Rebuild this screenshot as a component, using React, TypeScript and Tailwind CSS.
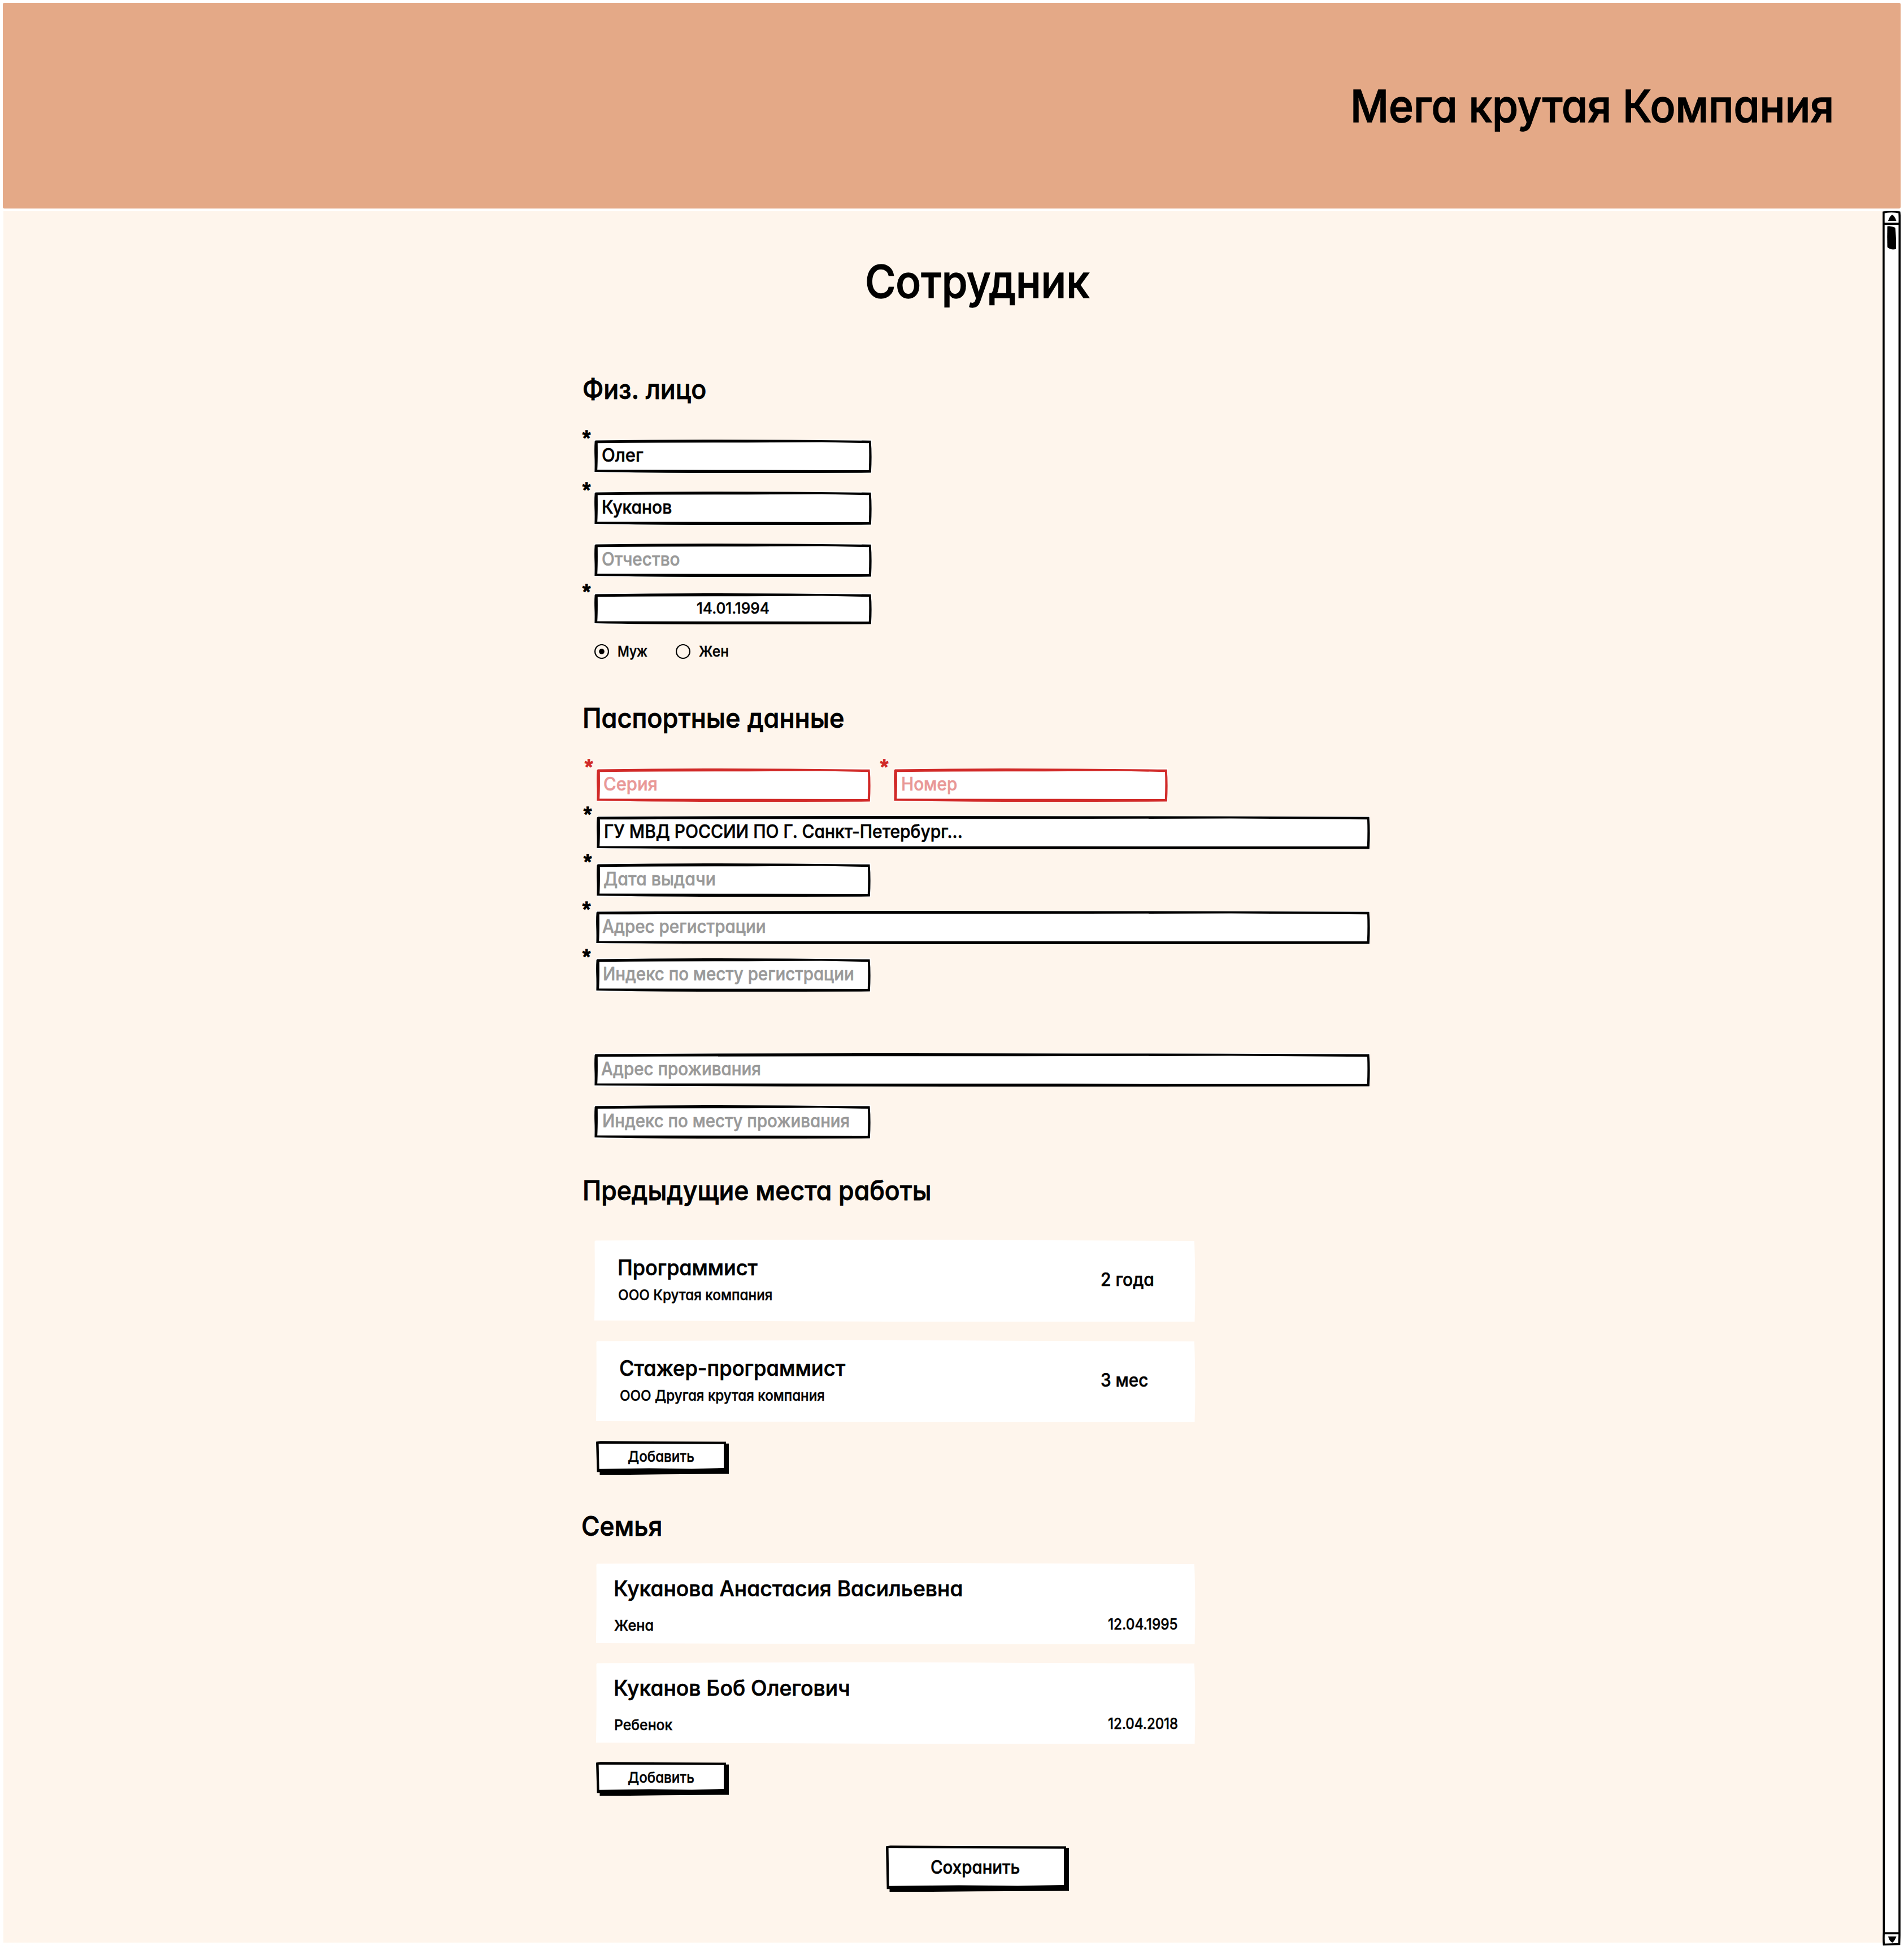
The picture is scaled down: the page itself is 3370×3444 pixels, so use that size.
import { useLayoutEffect, useRef, useState, type ReactNode } from 'react';

/** A line of text condensed or widened so that it fills `w` pixels. */
function Fit({ w, children, className = '' }: { w: number; children: string; className?: string }) {
  const ref = useRef<HTMLSpanElement>(null);
  const [k, setK] = useState(1);
  useLayoutEffect(() => {
    const el = ref.current;
    if (!el) return;
    const em = parseFloat(getComputedStyle(el).fontSize);
    setK(w / (el.offsetWidth - em * 0.115));
  }, [w]);
  return (
    <span className={`block shrink-0 whitespace-nowrap leading-none ${className}`} style={{ width: w }}>
      <span
        ref={ref}
        className="-ml-[0.055em] inline-block origin-left align-top [-webkit-text-stroke:0.018em_currentColor] [stroke-linejoin:round]"
        style={{ transform: `translateY(1px) scaleX(${k})` }}
      >
        {children}
      </span>
    </span>
  );
}

function Frame({ w, h, color }: { w: number; h: number; color: string }) {
  const outer = `M2 1.5 Q${w * 0.2} 0 ${w * 0.4} 0 Q${w * 0.7} 0.2 ${w - 1.5} 1.8 Q${w + 0.6} ${h * 0.45} ${w - 1.2} ${h - 0.4} Q${w * 0.75} ${h} ${w * 0.5} ${h} Q${w * 0.2} ${h} 0.4 ${h - 2} Q0.8 ${h * 0.7} 0.3 ${h * 0.5} Q-0.2 ${h * 0.25} 0.6 3 Z`;
  const inner = `M5.8 6.2 Q${w * 0.3} 4.9 ${w * 0.55} 5.3 L${w * 0.82} 4.6 L${w - 5} 6.2 Q${w - 4.2} ${h * 0.5} ${w - 5.2} ${h - 4.9} L${w * 0.6} ${h - 5.2} L5.2 ${h - 5.6} Q6.2 ${h * 0.6} 5.8 6.2 Z`;
  return (
    <svg className="absolute inset-0" width={w} height={h}>
      <rect width={w} height={h} fill="#fff" />
      <path d={outer + inner} fill={color} fillRule="evenodd" />
    </svg>
  );
}

type FieldProps = {
  w: number;
  h?: number;
  tw: number;
  text: string;
  tone?: 'value' | 'hint' | 'error';
  /** Horizontal place of the "required" mark; no mark when absent. */
  mark?: string;
  className?: string;
  textClass?: string;
};

const tones = { value: 'text-black', hint: 'text-[#999999]', error: 'text-[#e99897]' };

function Field({ w, h = 59, tw, text, tone = 'hint', mark, className = '', textClass = 'pl-[15px] pb-[5px] text-[32px]' }: FieldProps) {
  return (
    <div className={`relative ${className}`} style={{ width: w, height: h }}>
      <Frame w={w} h={h} color={tone === 'error' ? '#d12a28' : '#000'} />
      <div className={`relative flex h-full items-center ${tones[tone]} ${textClass}`}>
        <Fit w={tw}>{text}</Fit>
      </div>
      {mark && (
        <span
          className={`absolute -top-[20px] font-[Roboto,sans-serif] text-[31px] font-bold leading-none [-webkit-text-stroke:1.6px_currentColor] [stroke-linejoin:round] ${mark} ${tone === 'error' ? 'text-[#d12a28]' : 'text-black'}`}
        >
          *
        </span>
      )}
    </div>
  );
}

function Heading({ w, children, className }: { w: number; children: string; className: string }) {
  return (
    <h2 className={`text-[48px] leading-none ${className}`}>
      <Fit w={w}>{children}</Fit>
    </h2>
  );
}

function Card({ w, h, className, children }: { w: number; h: number; className: string; children: ReactNode }) {
  return (
    <div className={`relative ${className}`} style={{ width: w, height: h }}>
      <svg className="absolute inset-0" width={w} height={h}>
        <path
          d={`M2 1.5 Q${w * 0.3} -0.5 ${w * 0.6} 0.3 L${w - 2} 2 Q${w + 0.5} ${h * 0.5} ${w - 1.5} ${h} L${w * 0.5} ${h} L0 ${h - 2} Q1.2 ${h * 0.5} 0.5 3 Z`}
          fill="#fff"
        />
      </svg>
      <div className="relative flex h-full justify-between">{children}</div>
    </div>
  );
}

type JobProps = { w: number; className: string; title: string; tw: number; org: string; ow: number; term: string; ew: number };

function Job({ w, className, title, tw, org, ow, term, ew }: JobProps) {
  return (
    <Card w={w} h={145} className={className}>
      <div className="flex flex-col gap-[17px] pl-[43px] pt-[29px]">
        <Fit w={tw} className="text-[38px]">{title}</Fit>
        <Fit w={ow} className="text-[26px]">{org}</Fit>
      </div>
      <div className="flex w-[166px] items-center pb-[6px] text-[32px]">
        <Fit w={ew}>{term}</Fit>
      </div>
    </Card>
  );
}

function Relative({ name, nw, role, rw, date }: { name: string; nw: number; role: string; rw: number; date: string }) {
  return (
    <Card w={1061} h={144} className="mb-8 ml-[25px]">
      <div className="flex flex-col gap-[34px] pl-[33px] pt-[25px]">
        <Fit w={nw} className="text-[38px]">{name}</Fit>
        <Fit w={rw} className="text-[26px]">{role}</Fit>
      </div>
      <div className="w-[154px] pt-[94px] text-[26.5px]">
        <Fit w={121}>{date}</Fit>
      </div>
    </Card>
  );
}

function SketchButton({ w, h, tw, className, textClass, children }: { w: number; h: number; tw: number; className: string; textClass: string; children: string }) {
  return (
    <button type="button" className={`relative block ${className}`} style={{ width: w, height: h }}>
      <svg className="absolute inset-0" width={w} height={h}>
        <path
          d={`M0 1.6 L8 0.2 L${w * 0.4} 1 L${w - 5} 1.6 L${w - 5} 4.8 L${w} 4.8 L${w} ${h - 1.5} L${w * 0.5} ${h - 0.8} L${w * 0.25} ${h} L6.5 ${h} L6.5 ${h - 4.8} L1.6 ${h - 4.8} Z`}
          fill="#000"
        />
        <path
          d={`M4.6 5 L${w * 0.4} 5.2 L${w - 9} 5.8 L${w - 9} ${h - 12} L${w * 0.72} ${h - 10.6} L${w * 0.4} ${h - 11.4} L5.6 ${h - 10.2} Z`}
          fill="#fff"
        />
      </svg>
      <span className={`relative flex h-full ${textClass}`}>
        <Fit w={tw}>{children}</Fit>
      </span>
    </button>
  );
}

function Radio({ on = false, label, lw }: { on?: boolean; label: string; lw: number }) {
  return (
    <div className="flex items-center">
      <svg width="26" height="26" viewBox="0 0 26 26">
        <ellipse cx="13" cy="13" rx="11.9" ry="12" fill="none" stroke="#000" strokeWidth="2.2" />
        {on && <ellipse cx="13" cy="13" rx="4.8" ry="4.9" />}
      </svg>
      <Fit w={lw} className="ml-4 -mt-[2px] text-[26px]">{label}</Fit>
    </div>
  );
}

function ScrollBar() {
  return (
    <svg width="32" height="3071" viewBox="0 0 32 3071" className="shrink-0">
      <path d="M1.9 3 Q16 -0.5 29.8 3 Q30.6 10 30.2 22 L30 3052 L29.6 3067.5 L2.4 3068.5 Q1.6 3060 2.3 3046 L1.9 60 Z" fill="#fff" stroke="#000" strokeWidth="3.6" />
      <path d="M1 23 L31 23 M2 3048.3 L30 3048.3" stroke="#000" strokeWidth="3.8" />
      <path d="M10 18 Q12 10 17.3 7 Q22 10 24.5 18 Z" />
      <path d="M8.5 27.5 Q16 26.5 22.5 30 Q24.5 48 24 67.5 Q16 70.5 8.5 64.5 Q8 46 8.5 27.5 Z" />
      <path d="M10 3054.3 L24.5 3054.3 Q21 3063 17.6 3065 Q12 3063 10 3054.3 Z" />
    </svg>
  );
}

export default function App() {
  return (
    <div className="flex h-[3444px] w-[3370px] flex-col bg-white font-[Inter,sans-serif] font-medium text-black [font-feature-settings:'cv11']">
      <header className="ml-[5px] mt-[5px] flex h-[364px] w-[3359px] shrink-0 justify-end rounded-[3px] bg-[#e4a987] pr-[122px] pt-[142px] text-[79px]">
        <Fit w={848}>Мега крутая Компания</Fit>
      </header>

      <div className="ml-[6px] mt-1 flex flex-1 items-start">
        <main className="flex h-[3065px] w-[3326px] flex-col bg-[#fef5ec] pl-[1024px]">
          <h1 className="ml-[505px] mt-[84px] text-[80px] leading-none">
            <Fit w={389}>Сотрудник</Fit>
          </h1>

          <Heading w={214} className="ml-[4px] mt-[127px]">Физ. лицо</Heading>
          <Field w={491} tw={70} text="Олег" tone="value" mark="-left-[21px]" className="ml-[22px] mt-[66px]" />
          <Field w={491} tw={121} text="Куканов" tone="value" mark="-left-[21px]" className="ml-[22px] mt-[33px]" />
          <Field w={491} tw={135} text="Отчество" className="ml-[22px] mt-[33px]" />
          <Field w={491} h={55} tw={126} text="14.01.1994" tone="value" mark="-left-[21px]" className="ml-[22px] mt-[29px]" textClass="pl-[182px] pb-[5px] text-[27px]" />
          <div className="ml-[22px] mt-[35px] flex h-[26px] gap-[52px]">
            <Radio on label="Муж" lw={50} />
            <Radio label="Жен" lw={50} />
          </div>

          <Heading w={458} className="ml-[4px] mt-[80px]">Паспортные данные</Heading>
          <div className="ml-[26px] mt-[66px] flex gap-[41px]">
            <Field w={485} tw={92} text="Серия" tone="error" mark="-left-[21px]" textClass="pl-[14px] pb-[5px] text-[32px]" />
            <Field w={485} tw={96} text="Номер" tone="error" mark="-left-[24px]" />
          </div>
          <Field w={1369} tw={631} text="ГУ МВД РОССИИ ПО Г. Санкт-Петербург..." tone="value" mark="-left-[23px]" className="ml-[26px] mt-[25px]" />
          <Field w={485} tw={195} text="Дата выдачи" mark="-left-[23px]" className="ml-[26px] mt-[25px]" textClass="pl-[14px] pb-[5px] text-[32px]" />
          <Field w={1370} tw={286} text="Адрес регистрации" mark="-left-[24px]" className="ml-[25px] mt-[25px]" textClass="pl-[13px] pb-[5px] text-[32px]" />
          <Field w={486} tw={441} text="Индекс по месту регистрации" mark="-left-[24px]" className="ml-[25px] mt-[25px]" textClass="pl-[14px] pb-[5px] text-[32px]" />
          <Field w={1373} tw={280} text="Адрес проживания" className="ml-[22px] mt-[109px]" textClass="pl-[14px] pb-[5px] text-[32px]" />
          <Field w={489} tw={435} text="Индекс по месту проживания" className="ml-[22px] mt-[33px]" textClass="pl-[16px] pb-[5px] text-[32px]" />

          <Heading w={612} className="mb-16 ml-[4px] mt-[67px]">Предыдущие места работы</Heading>
          <Job w={1064} className="mb-[33px] ml-[22px]" title="Программист" tw={244} org="ООО Крутая компания" ow={271} term="2 года" ew={91} />
          <Job w={1061} className="mb-[33px] ml-[25px]" title="Стажер-программист" tw={396} org="ООО Другая крутая компания" ow={360} term="3 мес" ew={81} />
          <SketchButton w={235} h={60} tw={115} className="ml-[25px]" textClass="pl-[57px] pt-[14px] text-[26px]">Добавить</SketchButton>

          <Heading w={138} className="mb-[42px] ml-[2px] mt-[66px]">Семья</Heading>
          <Relative name="Куканова Анастасия Васильевна" nw={614} role="Жена" rw={67} date="12.04.1995" />
          <Relative name="Куканов Боб Олегович" nw={415} role="Ребенок" rw={100} date="12.04.2018" />
          <SketchButton w={235} h={60} tw={115} className="ml-[25px]" textClass="pl-[57px] pt-[14px] text-[26px]">Добавить</SketchButton>

          <SketchButton w={324} h={82} tw={155} className="ml-[538px] mt-[88px]" textClass="pl-[81px] pt-[22px] text-[32px]">Сохранить</SketchButton>
        </main>
        <ScrollBar />
      </div>
    </div>
  );
}
